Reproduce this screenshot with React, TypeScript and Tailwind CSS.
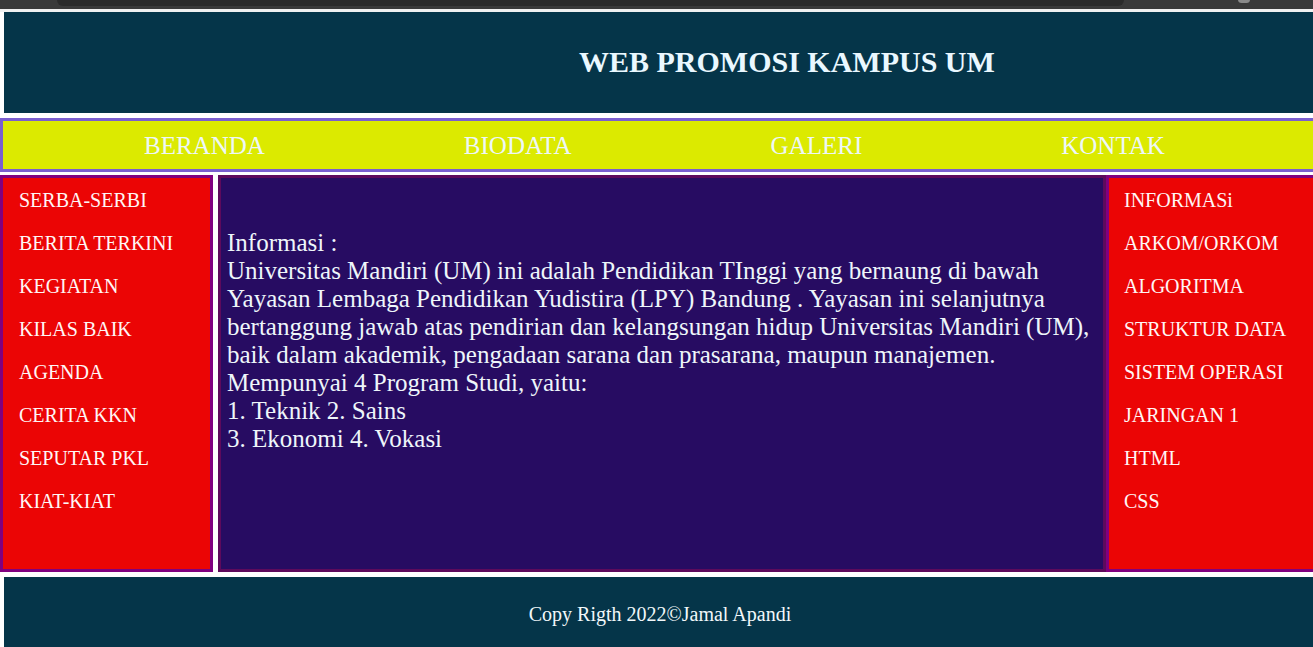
import React from "react";

const leftItems = ["SERBA-SERBI", "BERITA TERKINI", "KEGIATAN", "KILAS BAIK", "AGENDA", "CERITA KKN", "SEPUTAR PKL", "KIAT-KIAT"];
const rightItems = ["INFORMASi", "ARKOM/ORKOM", "ALGORITMA", "STRUKTUR DATA", "SISTEM OPERASI", "JARINGAN 1", "HTML", "CSS"];
const navItems = ["BERANDA", "BIODATA", "GALERI", "KONTAK"];

export default function App() {
  return (
    <div
      className="w-[1313px] h-[647px] overflow-hidden bg-white"
      style={{ fontFamily: '"Liberation Serif", "Times New Roman", serif' }}
    >
      <div className="w-[1318px]">
        {/* browser chrome strip */}
        <div className="relative h-[9px] bg-[#3a3a3a]">
          <div className="absolute left-[57px] top-0 h-[6px] w-[1067px] rounded-b-[8px] bg-[#2b2b2b]" />
          <div className="absolute left-[1238px] top-[-4px] h-[7px] w-[12px] rounded-full bg-[#8a8a8a]" />
        </div>
        <div className="h-[3px] bg-[#f0f0f0]" />

        {/* header */}
        <div className="ml-[4px] h-[101px] bg-[#053549] flex items-center pl-[575px] pb-[2px]">
          <h1 className="text-[30px] font-bold text-[#eaf8ff] leading-none">WEB PROMOSI KAMPUS UM</h1>
        </div>

        {/* nav */}
        <div className="mt-[5px] h-[54px] border-[3px] border-[#7a5fcf] bg-[#dcea00] flex items-center pl-[141px] gap-[199px]">
          {navItems.map((n) => (
            <span key={n} className="text-[25px] text-[#eef7f7] leading-none">
              {n}
            </span>
          ))}
        </div>

        {/* main */}
        <div className="mt-[3px] flex h-[397px]">
          <div className="w-[213px] border-[3px] border-[#800080] bg-[#eb0505] pt-[11px] pl-[16px] flex flex-col gap-[20px]">
            {leftItems.map((t) => (
              <div key={t} className="text-[20px] text-[#fff6f6] leading-[23px] whitespace-nowrap">
                {t}
              </div>
            ))}
          </div>
          <div className="ml-[5px] w-[888px] border-[3px] border-[#5e0a5c] bg-[#270c62] pt-[51px] pl-[6px] pr-[4px]">
            <p className="text-[25px] leading-[28px] text-[#eef6fa]">
              Informasi :<br />
              Universitas Mandiri (UM) ini adalah Pendidikan TInggi yang bernaung di bawah Yayasan Lembaga Pendidikan Yudistira (LPY) Bandung . Yayasan ini selanjutnya bertanggung jawab atas pendirian dan kelangsungan hidup Universitas Mandiri (UM), baik dalam akademik, pengadaan sarana dan prasarana, maupun manajemen.
              <br />
              Mempunyai 4 Program Studi, yaitu:
              <br />
              1. Teknik 2. Sains
              <br />
              3. Ekonomi 4. Vokasi
            </p>
          </div>
          <div className="w-[212px] border-[3px] border-[#800080] bg-[#eb0505] pt-[11px] pl-[15px] flex flex-col gap-[20px]">
            {rightItems.map((t) => (
              <div key={t} className="text-[20px] text-[#fff6f6] leading-[23px] whitespace-nowrap">
                {t}
              </div>
            ))}
          </div>
        </div>

        {/* footer */}
        <div className="mt-[5px] ml-[4px] w-[1312px] h-[74px] bg-[#053549] flex items-center justify-center">
          <span className="text-[20px] text-[#f2f8fa]">Copy Rigth 2022©Jamal Apandi</span>
        </div>
      </div>
    </div>
  );
}
